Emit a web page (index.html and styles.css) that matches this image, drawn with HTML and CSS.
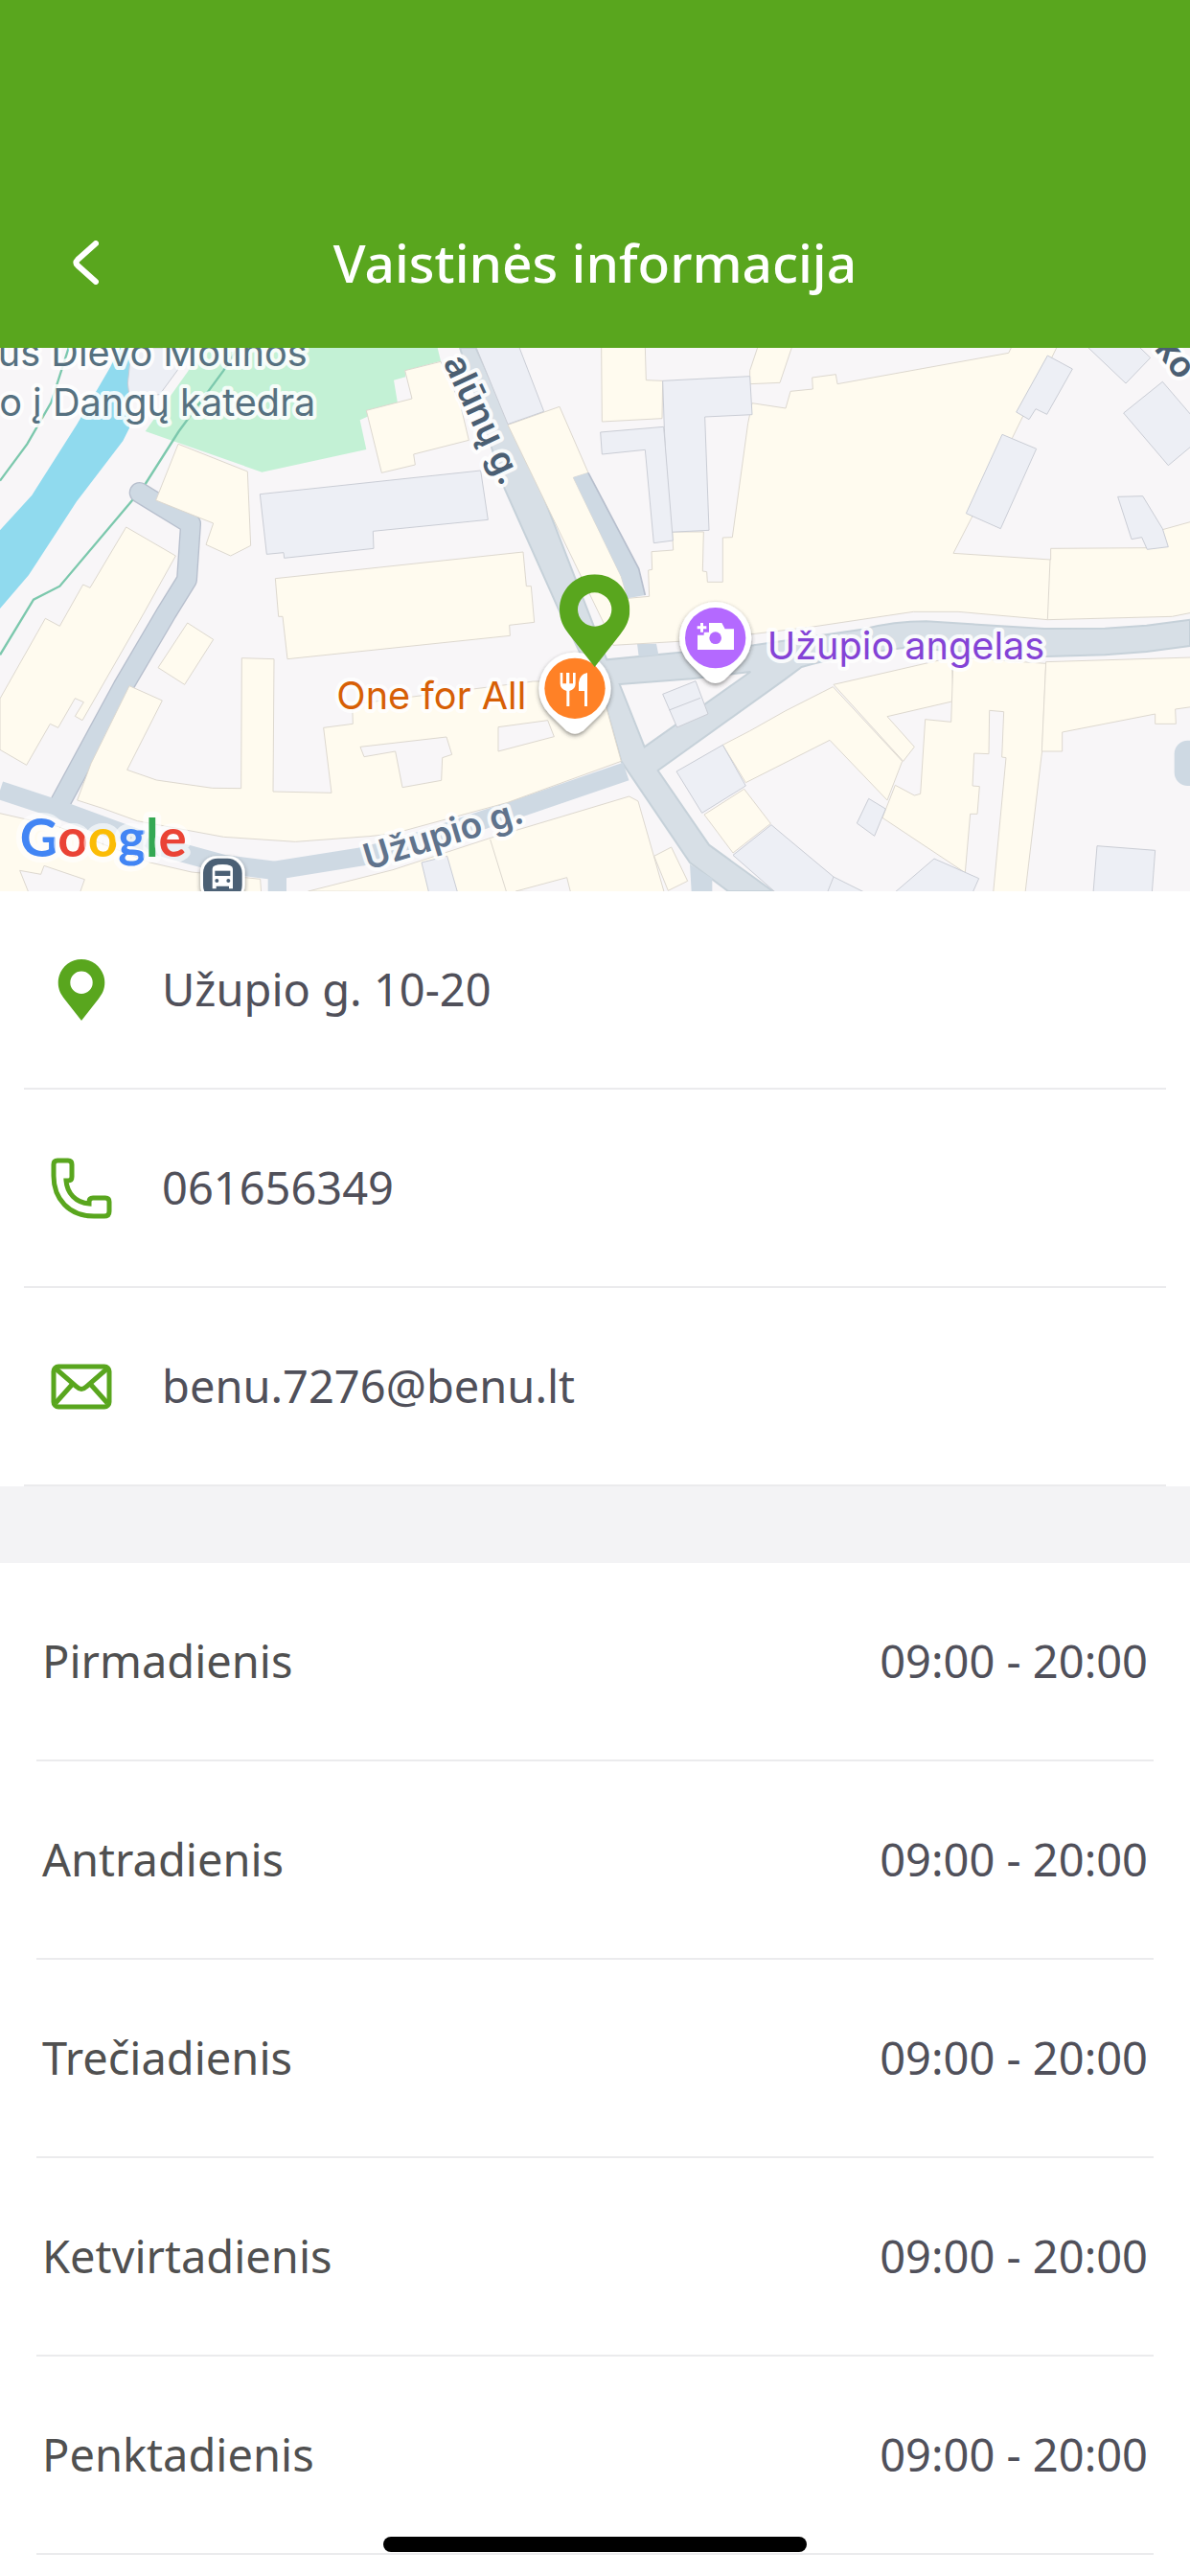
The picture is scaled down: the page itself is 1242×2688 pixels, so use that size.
FILE: index.html
```html
<!DOCTYPE html>
<html lang="lt">
<head>
  <meta charset="UTF-8" />
  <meta name="viewport" content="width=device-width, initial-scale=1.0"/>
  <title>Vaistinės informacija</title>
  <link rel="stylesheet" href="styles.css">
</head>
<body>
  <header class="header">
    <button type="button" class="back" aria-label="Atgal">
      <svg viewBox="0 0 28 46" aria-hidden="true"><path d="M25 3 L6 20 Q3 23 6 26 L25 43"/></svg>
    </button>
    <h1>Vaistinės informacija</h1>
  </header>

  <main>
    <svg class="map" viewBox="0 9 3726 1701" role="img" aria-label="Žemėlapis">
      <defs>
        <symbol id="pin" viewBox="0 0 220 290">
          <path fill-rule="evenodd" d="M110 0 C49 0 0 49 0 110 C0 144 12 164 30 188 L110 290 L190 188 C208 164 220 144 220 110 C220 49 171 0 110 0Z M110 57 a53 53 0 1 1 0 106 a53 53 0 1 1 0 -106Z"/>
        </symbol>
        <filter id="shadow" x="-20%" y="-20%" width="140%" height="150%">
          <feDropShadow dx="0" dy="6" stdDeviation="7" flood-color="#333" flood-opacity="0.55"/>
        </filter>
      </defs>

      <!-- park and river -->
      <path class="park" d="M610 9 L590 80 455 270 820 398 1147 327 1127 235 1245 182 1233 110 1270 100 1268 80 1380 50 1370 9Z"/>
      <path class="water" d="M375 9 L345 70 240 250 100 470 0 580 V825 L90 720 240 490 385 300 405 260 408 9Z"/>
      <path class="grey" d="M412 9 L400 120 405 160 500 155 555 80 590 9Z"/>

      <!-- main streets -->
      <path class="street" d="M1440 9 L1580 450 1750 830 1795 920 1900 1140 1945 1303 1970 1340 2160 1620 2280 1710 H2420 L2220 1565 2060 1332 2460 1045 2510 1008 Q2640 970 2830 948 L3275 975 3460 970 3590 960 3726 942 V860 L3590 878 3460 887 3270 888 2900 865 Q2800 865 2700 890 L2360 940 2130 962 1900 985 1700 470 1490 9Z"/>
      <path class="island" d="M1940 1062 L2165 1045 2350 1023 2018 1258Z"/>

      <!-- small streets -->
      <path class="lane-edge" d="M437 462 L597 560 585 735 520 840 385 1070 190 1430"/>
      <path class="lane" d="M437 462 L597 560 585 735 520 840 385 1070 190 1430"/>
      <path class="lane" d="M0 1394 L200 1460 500 1570 700 1625 860 1645 1130 1602 1260 1570 1640 1445 1960 1335"/>
      <path class="lane" d="M868 1650 V1710"/>
      <path class="lane-fill" d="M1995 935 H2055 L2062 970 2000 975Z M2160 1625 L2165 1710 H2230 V1670Z"/>
      <rect class="lane-fill" x="3677" y="1238" width="90" height="142" rx="42"/>

      <!-- tram lines -->
      <path class="trail" d="M215 9 L160 180 85 310 0 425"/>
      <path class="trail" d="M745 9 L700 80 560 270 455 435 M415 485 L187 755 105 797 0 970"/>

      <!-- buildings -->
      <g class="cream">
        <path d="M1147 205 L1290 168 1268 80 1380 52 1440 180 1468 298 1295 342 1300 375 1195 400Z"/>
        <path d="M558 310 L775 396 785 628 722 660 645 625 668 558 610 535 488 486Z"/>
        <path d="M395 570 L550 660 450 840 258 1175 235 1162 262 1118 235 1106 182 1198 157 1186 83 1315 0 1267 V1107 L142 856 187 880 260 750 282 760Z"/>
        <path d="M862 731 L1638 648 1648 755 1663 755 1673 868 1595 877 1597 910 900 983 885 850 872 850Z"/>
        <path d="M587 870 L668 922 578 1063 495 1010Z"/>
        <path d="M405 1067 L508 1113 398 1330 490 1362 Q580 1375 665 1387 L755 1388 757 980 858 983 855 1398 1038 1402 1013 1198 1105 1186 1103 1125 1670 1053 1890 1050 1900 1140 1945 1303 1590 1432 1230 1530 1155 1538 925 1555 700 1540 430 1490 320 1450 242 1425 285 1310Z"/>
        <path d="M-5 1465 L180 1507 470 1620 600 1650 815 1672 818 1715 H-5Z"/>
        <path d="M965 1710 L1230 1643 1530 1545 1970 1413 1998 1428 2080 1715Z M1535 1548 L1585 1710"/>
        <path d="M2048 1600 L2102 1572 2153 1678 2092 1708Z"/>
        <path d="M1883 5 H2020 L2023 110 2075 112 2073 230 1885 240Z"/>
        <path d="M2373 5 H2480 L2442 118 2348 122 V80Z"/>
        <path d="M2105 585 L2108 642 2040 647 2042 703 2030 705 2033 787 1965 793 1945 725 1795 415 1842 400 1752 193 1590 250 1890 870 1920 940 2125 928 2355 905 2545 882 2860 835 3000 835 3280 860 3670 850 3730 838 V553 L3640 578 3592 635 3290 637 V672 L2985 652 3040 545 3170 290 3310 5 H3168 L3158 25 2622 122 2617 92 2543 102 2545 138 2475 145 2460 198 2355 182 2342 245 2293 602 2263 603 V742 H2215 L2213 710 2200 708 2203 585Z M3288 672 L3280 860"/>
        <path d="M2263 1252 L2348 1208 2460 1145 2608 1070 2825 1303 2778 1425 2598 1237 2335 1370Z"/>
        <path d="M2610 1063 L2980 978 2985 1115 2778 1163 2863 1258 2828 1303Z"/>
        <path d="M2985 978 L3275 997 3263 1270 3210 1715 H3110 L3150 1292 3137 1290 3143 1148 3098 1144 3096 1280 3050 1278 3045 1380 3067 1382 3060 1468 3038 1468 3022 1652 2763 1480 2803 1378 2863 1410 2882 1405 2897 1172 2978 1180Z"/>
        <path d="M3275 992 L3730 978 V1133 L3680 1140 3682 1186 3617 1186 3617 1155 3326 1212 3326 1272 3262 1272Z"/>
        <path d="M2205 1470 L2330 1390 2413 1498 2295 1590Z"/>
      </g>
      <g class="yard">
        <path d="M1128 1258 L1398 1227 1415 1282 1385 1292 1382 1363 1260 1385 1238 1272 1140 1289Z"/>
        <path d="M1560 1196 L1715 1175 1735 1226 1560 1272Z"/>
        <path d="M62 1645 L128 1657 138 1630 265 1673 250 1715 H90Z"/>
        <path d="M1615 1710 L1775 1667 1787 1715Z"/>
      </g>
      <g class="grey">
        <path d="M814 467 L1505 393 1528 547 1168 583 1170 637 890 667 888 650 835 655Z"/>
        <path d="M1490 5 H1625 L1703 208 1590 248Z"/>
        <path d="M2075 112 L2348 98 2355 218 2207 225 2220 580 2095 586 2080 260Z"/>
        <path d="M1880 273 L2078 256 2107 612 2047 620 2020 328 1885 342Z"/>
        <path d="M3280 33 L3358 75 3278 217 3243 200 3222 233 3182 210Z"/>
        <path d="M3138 280 L3245 325 3133 575 3025 527Z"/>
        <path d="M3404 5 H3566 L3602 40 3525 120Z"/>
        <path d="M3640 115 L3730 220 V317 L3658 377 3518 213Z"/>
        <path d="M3500 475 L3578 473 3640 575 3658 632 3592 640 3575 602 3543 608Z"/>
        <path d="M2720 1420 L2773 1452 2738 1537 2683 1497Z"/>
        <path d="M2925 1608 L3065 1670 3045 1715 H2800Z"/>
        <path d="M3435 1568 L3617 1582 3607 1715 H3423Z"/>
        <path d="M2263 1252 L2335 1380 2198 1465 2118 1335Z"/>
        <path d="M2295 1597 L2415 1502 2460 1540 2610 1665 2710 1715 H2430Z M2610 1665 L2590 1715"/>
        <path d="M2075 1093 L2178 1052 2217 1155 2120 1197Z M2095 1143 L2193 1105"/>
        <path d="M1320 1620 L1400 1600 1433 1715 H1343Z"/>
      </g>
      <path class="lane-fill" d="M1795 415 L1842 400 2000 700 2020 783 1965 793 1945 725Z"/>
      <path class="lane-side" d="M1842 400 L2000 700 2020 783"/>

      <!-- labels -->
      <g class="label">
        <text class="poi" x="962" y="67" text-anchor="end">us Dievo Motinos</text>
        <text class="poi" x="988" y="223" text-anchor="end">o į Dangų katedra</text>
        <text class="road" text-anchor="end" transform="translate(1570 446) rotate(65)">alūnų g.</text>
        <text class="road soft" transform="translate(1152 1644) rotate(-17)">Užupio g.</text>
        <text class="road" transform="translate(3612 12) rotate(52)">ko</text>
        <text class="food" x="1054" y="1140">One for All</text>
        <text class="sight" x="2402" y="983">Užupio angelas</text>
      </g>

      <!-- markers -->
      <g transform="translate(697 1668)" filter="url(#shadow)">
        <rect x="-70" y="-68" width="140" height="140" rx="50" fill="#fff"/>
        <rect x="-61" y="-61" width="122" height="130" rx="46" fill="#4b6075"/>
        <path fill="#fff" d="M-32 34 V-28 Q-32 -42 0 -42 Q32 -42 32 -28 V34 H20 V26 H-20 V34Z"/>
        <path fill="#4b6075" d="M-24 -22 H24 V-6 H-24Z"/>
        <circle cx="-18" cy="9" r="6" fill="#4b6075"/>
        <circle cx="18" cy="9" r="6" fill="#4b6075"/>
      </g>
      <g transform="translate(2240 917)">
        <path filter="url(#shadow)" fill="#fff" d="M-80 80 A113 113 0 1 1 80 80 L27 132 Q0 152 -27 132Z"/>
        <circle r="95" fill="#b469ff"/>
        <path fill="#fff" d="M-56 37 V-9 H-36 V-18 H-20 V-47 H20 L30 -28 H58 V37Z"/>
        <path fill="#fff" stroke="#b469ff" stroke-width="5" paint-order="stroke" d="M-47 -47 h9 v10 h10 v9 h-10 v10 h-9 v-10 h-10 v-9 h10Z"/>
        <circle r="19" fill="#b469ff"/>
      </g>
      <g transform="translate(1800 1075)">
        <path filter="url(#shadow)" fill="#fff" d="M-80 80 A113 113 0 1 1 80 80 L27 132 Q0 152 -27 132Z"/>
        <circle r="95" fill="#ff8126"/>
        <path fill="#fff" d="M-46 -49 h8 v34 h11 v-34 h10 v34 h11 v-34 h8 v34 q0 18 -19 23 v48 h-9 v-48 q-20 -5 -20 -23Z"/>
        <path fill="#fff" d="M39 -49 V56 H30 V8 H12 V-18 Q14 -44 39 -49Z"/>
      </g>
      <use href="#pin" class="pin" x="1752" y="718" width="220" height="290"/>

      <text class="google" x="62" y="1602"><tspan fill="#4285f4">G</tspan><tspan fill="#ea4335">o</tspan><tspan fill="#fbbc05">o</tspan><tspan fill="#4285f4">g</tspan><tspan fill="#34a853">l</tspan><tspan fill="#ea4335">e</tspan></text>
    </svg>

    <ul class="contacts">
      <li>
        <svg class="icon icon-pin" aria-hidden="true"><use href="#pin"/></svg>
        <span>Užupio g. 10-20</span>
      </li>
      <li>
        <svg class="icon" viewBox="0 0 64 64" aria-hidden="true">
          <path d="M7 3 H18 Q22 3 22 7 V20 Q22 24 18 24 H16 C17 37 26 47 40 48 V46 Q40 42 44 42 H57 Q61 42 61 46 V56 Q61 61 56 61 H45 C19 61 3 43 3 19 V7 Q3 3 7 3Z"/>
        </svg>
        <a href="tel:061656349">061656349</a>
      </li>
      <li>
        <svg class="icon" viewBox="0 0 64 64" aria-hidden="true">
          <rect x="3" y="11" width="58" height="42" rx="5"/>
          <path d="M5 13 L27 32 Q32 37 37 32 L59 13 M22 30 L5 49 M42 30 L59 49"/>
        </svg>
        <a href="mailto:benu.7276@benu.lt">benu.7276@benu.lt</a>
      </li>
    </ul>

    <section class="hours">
      <table>
        <tbody>
          <tr><th scope="row">Pirmadienis</th><td>09:00 - 20:00</td></tr>
          <tr><th scope="row">Antradienis</th><td>09:00 - 20:00</td></tr>
          <tr><th scope="row">Trečiadienis</th><td>09:00 - 20:00</td></tr>
          <tr><th scope="row">Ketvirtadienis</th><td>09:00 - 20:00</td></tr>
          <tr><th scope="row">Penktadienis</th><td>09:00 - 20:00</td></tr>
        </tbody>
      </table>
    </section>
  </main>

  <div class="home-indicator"></div>
</body>
</html>
```

FILE: styles.css
```css
* {
  box-sizing: border-box;
}
body {
  margin: 0;
  background-color: #fff;
  color: #50505a;
  font-family: 'Noto Sans', 'Open Sans', sans-serif;
  font-size: 47px;
  line-height: 61px;
}
a {
  color: inherit;
  text-decoration: none;
}

/* Header */
.header {
  display: grid;
  grid-template-columns: 1fr auto 1fr;
  align-items: center;
  padding: 234px 59px 49px;
  background-color: #59a61e;
  color: white;
}
.header h1 {
  margin: 0;
  font-size: 55px;
  font-weight: 500;
  line-height: 80px;
}
.back {
  justify-self: start;
  display: flex;
  padding: 16px;
  border: none;
  background: none;
  cursor: pointer;
}
.back svg {
  width: 28px;
  height: 46px;
  fill: none;
  stroke: white;
  stroke-width: 6;
  stroke-linecap: round;
}

/* Map */
.map {
  display: block;
  width: 100%;
  height: auto;
  background-color: #f8f6f8;
}
.park {
  fill: #c3f1d5;
}
.water {
  fill: #90daee;
}
.street {
  fill: #d7dfe6;
  stroke: #c6d1d9;
  stroke-width: 6;
}
.island {
  fill: #f8f6f8;
  stroke: #c6d1d9;
  stroke-width: 6;
}
.lane, .lane-edge {
  fill: none;
  stroke: #ced9e3;
  stroke-width: 58;
  stroke-linejoin: round;
}
.lane-edge {
  stroke: #b7bfcd;
  stroke-width: 66;
  stroke-linecap: round;
}
.lane-edge + .lane {
  stroke-linecap: round;
}
.lane-fill {
  fill: #ced9e3;
}
.lane-side {
  fill: none;
  stroke: #b7bfcd;
  stroke-width: 5;
}
.trail {
  fill: none;
  stroke: #7cc8ad;
  stroke-width: 7;
}
.cream {
  fill: #fffbef;
  stroke: #ddd8cf;
  stroke-width: 3;
}
.yard {
  fill: #f8f6f8;
  stroke: #ddd8cf;
  stroke-width: 3;
}
.grey {
  fill: #edeff5;
  stroke: #cacdd5;
  stroke-width: 3;
}
.label text {
  font-family: Inter, Roboto, sans-serif;
  font-size: 119px;
  paint-order: stroke;
  stroke: rgba(255, 255, 255, 0.85);
  stroke-width: 24;
  stroke-linejoin: round;
}
.label .poi {
  fill: #567180;
}
.label .road {
  fill: #4b5f73;
  font-size: 112px;
  font-weight: 600;
}
.label .soft {
  fill: #5f738c;
}
.label .food {
  fill: #d75f05;
}
.label .sight {
  fill: #8443d6;
}
.google {
  font-family: Lato, sans-serif;
  font-size: 164px;
  font-weight: 700;
  paint-order: stroke;
  stroke: rgba(255, 255, 255, 0.6);
  stroke-width: 36;
  stroke-linejoin: round;
}
.pin {
  fill: #59a61e;
}

/* Contacts */
.contacts {
  margin: 0;
  padding: 0 25px;
  list-style: none;
}
.contacts li {
  display: flex;
  align-items: center;
  gap: 52px;
  padding: 72px 28px;
  border-bottom: 2px solid #ebebed;
}
.icon {
  width: 64px;
  height: 64px;
  margin: -2px 0;
  fill: none;
  stroke: #59a61e;
  stroke-width: 5;
}
.icon-pin {
  fill: #59a61e;
  stroke: none;
}

/* Opening hours */
.hours {
  padding: 0 38px;
  border-top: 80px solid #f3f3f5;
}
table {
  width: 100%;
  border-collapse: separate;
  border-spacing: 0;
}
th, td {
  padding: 72px 6px;
  border-bottom: 2px solid #ebebed;
}
th {
  color: #505050;
  font-weight: 400;
  text-align: left;
}
td {
  text-align: right;
}

.home-indicator {
  position: fixed;
  bottom: 25px;
  left: 50%;
  width: 442px;
  height: 16px;
  border-radius: 8px;
  background-color: black;
  transform: translateX(-50%);
}
```
